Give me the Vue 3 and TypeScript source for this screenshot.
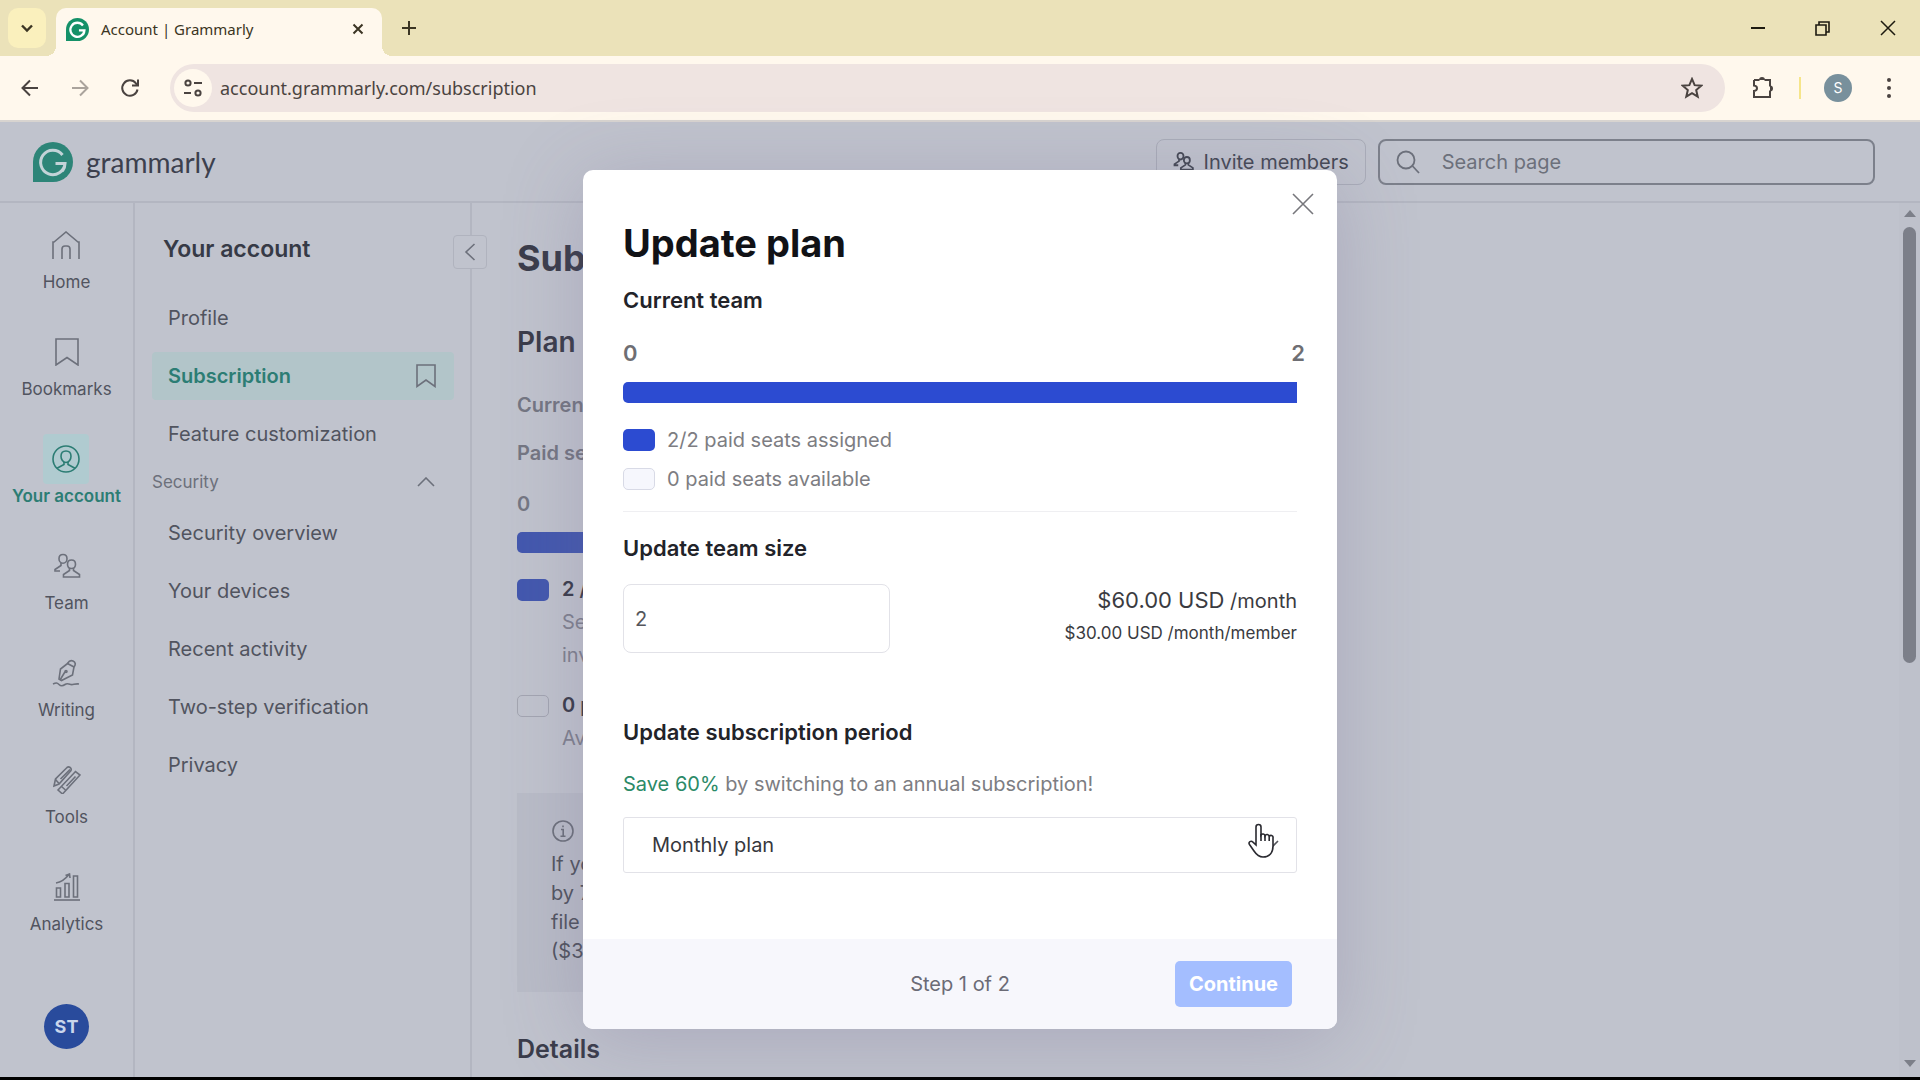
<script setup lang="ts">
import { ref } from 'vue'

interface RailItem {
  label: string
  paths: string[]
  active?: boolean
}

const rail: RailItem[] = [
  { label: 'Home', paths: ['M1 28V11h1L14 1l12 10h1v17', 'M10 28V18a3 3 0 0 1 3-3h2a3 3 0 0 1 3 3v10'] },
  { label: 'Bookmarks', paths: ['M3 1h22v26l-11-7.500-11 7.500z'] },
  {
    label: 'Your account',
    active: true,
    paths: [
      'M14 1a13 13 0 1 1 0 26a13 13 0 0 1 0-26z',
      'M14 6c3.400 0 5 2.400 5 5.200c0 3.200-2 6.300-5 6.300s-5-3.100-5-6.300C9 8.400 10.600 6 14 6z',
      'M12 17v2.500L5 23.300M16 17v2.500l7 3.800',
    ],
  },
  {
    label: 'Team',
    paths: [
      'M10 2.500c2.600 0 4 1.900 4 4.200s-1.500 4.600-4 4.600s-4-2.300-4-4.600s1.400-4.200 4-4.200z',
      'M8 11v2.500L2 17.500v1.500h5',
      'M18.500 8c2.600 0 4 1.900 4 4.200s-1.500 4.300-4 4.300s-4-2-4-4.300S15.900 8 18.500 8z',
      'M16.500 16v2.500L10.500 22.500v2.500h16v-2.500L20.500 18.500V16',
    ],
  },
  {
    label: 'Writing',
    paths: [
      'M15.500 4.500l6.500 3.500l-1.500 8L9.500 21.500L7 20L8.500 10z',
      'M15.500 4.500C17 2 18.500 .8 21 2s3 3.500 1 6',
      'M8 21l5.500-9M13 12.500a1 1 0 1 0 2 0a1 1 0 1 0-2 0',
      'M1 25c3-1.500 4-1.500 6 .5s4 1.500 6 0s4-.5 6 0s4-1 8-.5',
    ],
  },
  {
    label: 'Tools',
    paths: [
      'M1 20l1.500-7L14 1.500c2-1.500 5 .5 4 3L6 18z',
      'M2.500 13.500L6 17.500M7.500 13L17 3.500',
      'M5 24L22.500 5.500L27 9L9.500 28z',
      'M8.500 20.500l4 3.500M13.500 20l9-9.500',
    ],
  },
  {
    label: 'Analytics',
    paths: [
      'M1 27h26',
      'M3.500 15h4v9h-4zM12 10.500h4V24h-4zM20.500 3h4v21h-4z',
      'M3 10c6-1 9-3.500 13-8.500M12.500 2.500L16.500 1l.5 4',
    ],
  },
]

const accountLinks = ['Profile', 'Subscription', 'Feature customization']
const securityLinks = ['Security overview', 'Your devices', 'Recent activity', 'Two-step verification', 'Privacy']

const teamSize = ref('2')
const period = ref('monthly')
const address = ref('account.grammarly.com/subscription')
</script>

<template>
  <div class="window">
    <div class="tabstrip">
      <button class="tab-menu" aria-label="Search tabs">
        <svg width="12" height="12" viewBox="0 0 12 12"><path d="M1 3.500l5 5 5-5" stroke-width="2.400" /></svg>
      </button>
      <div class="tab">
        <svg class="favicon" width="23" height="23" viewBox="0 0 40 40">
          <path class="mark" d="M20 0a20 20 0 1 1 0 40H0V20A20 20 0 0 1 20 0z" />
          <path class="glyph" d="M29.500 13A12.200 12.200 0 1 0 32 21.500H22.500M32 21.500c0 3-.8 5.500-2.500 7.500" stroke-width="4" />
        </svg>
        <span class="tab-title">Account | Grammarly</span>
        <button class="plain" aria-label="Close tab">
          <svg width="12" height="12" viewBox="0 0 12 12"><path d="M1.500 1.500l9 9M10.500 1.500l-9 9" stroke-width="2" /></svg>
        </button>
      </div>
      <button class="plain new-tab" aria-label="New tab">
        <svg width="16" height="16" viewBox="0 0 16 16"><path d="M8 1v14M1 8h14" stroke-width="2" /></svg>
      </button>
      <div class="controls">
        <button class="plain" aria-label="Minimize">
          <svg width="14" height="14" viewBox="0 0 14 14"><path d="M0 7h14" stroke-width="2" /></svg>
        </button>
        <button class="plain" aria-label="Restore">
          <svg width="15" height="15" viewBox="0 0 15 15"><path d="M1 4h10v10H1zM4 4V1h10v10h-3" stroke-width="1.600" /></svg>
        </button>
        <button class="plain" aria-label="Close">
          <svg width="16" height="16" viewBox="0 0 16 16"><path d="M1 1l14 14M15 1L1 15" stroke-width="1.500" /></svg>
        </button>
      </div>
    </div>

    <div class="toolbar">
      <button class="plain nav-button" aria-label="Back">
        <svg width="18" height="18" viewBox="0 0 18 18"><path d="M17 9H2M9 1.500L1.500 9L9 16.500" stroke-width="2" /></svg>
      </button>
      <button class="plain nav-button faded" aria-label="Forward">
        <svg width="18" height="18" viewBox="0 0 18 18"><path d="M1 9h15M9 1.500L16.500 9L9 16.500" stroke-width="2" /></svg>
      </button>
      <button class="plain nav-button" aria-label="Reload">
        <svg width="20" height="20" viewBox="0 0 20 20"><path d="M17.500 11.500a7.700 7.700 0 1 1-1.500-6.200L18 7.500M18 1.500v6h-6" stroke-width="2" /></svg>
      </button>
      <div class="omnibox">
        <button class="site-info" aria-label="Site information">
          <svg width="18" height="18" viewBox="0 0 18 18">
            <path d="M10 4h8M0 14h7" stroke-width="2" />
            <circle cx="4" cy="4" r="2.600" stroke-width="2" />
            <circle cx="14" cy="14" r="2.600" stroke-width="2" />
          </svg>
        </button>
        <input v-model="address" class="address" type="text" aria-label="Address" />
        <button class="plain" aria-label="Bookmark this tab">
          <svg width="22" height="22" viewBox="0 0 20 20">
            <path d="M10 1.800l2.400 5.600 6 .5-4.600 4 1.400 6-5.200-3.200-5.200 3.200 1.400-6-4.600-4 6-.5z" stroke-width="1.800" />
          </svg>
        </button>
      </div>
      <button class="plain extensions" aria-label="Extensions">
        <svg width="24" height="24" viewBox="0 0 24 24">
          <path d="M3 4h5.500M13.500 4H19v6.500M19 14.500V21H3v-6c4-.5 4-5 0-5.500V4" stroke-width="2" />
          <path class="solid" d="M8 4a3 3 0 0 1 6 0zM19 9.500a3 3 0 0 1 0 6z" />
        </svg>
      </button>
      <span class="divider"></span>
      <button class="profile" aria-label="Profile">S</button>
      <button class="plain" aria-label="Browser menu">
        <svg width="6" height="22" viewBox="0 0 6 22">
          <g class="solid"><circle cx="3" cy="3" r="2" /><circle cx="3" cy="11" r="2" /><circle cx="3" cy="19" r="2" /></g>
        </svg>
      </button>
    </div>

    <div class="page">
      <header class="topbar">
        <a href="#" class="brand">
          <svg width="40" height="40" viewBox="0 0 40 40">
            <path class="mark" d="M20 0a20 20 0 1 1 0 40H0V20A20 20 0 0 1 20 0z" />
            <path class="glyph" d="M29.500 13A12.200 12.200 0 1 0 32 21.500H22.500M32 21.500c0 3-.8 5.500-2.500 7.500" stroke-width="3" />
          </svg>
          <span>grammarly</span>
        </a>
        <button class="invite">
          <svg width="21" height="21" viewBox="0 0 28 28">
            <path v-for="d in rail[3].paths" :key="d" :d="d" stroke-width="2.400" />
          </svg>
          Invite members
        </button>
        <label class="search">
          <svg width="24" height="24" viewBox="0 0 24 24"><circle cx="10" cy="10" r="8.500" stroke-width="1.800" /><path d="M16.500 16l6.500 7" stroke-width="1.800" /></svg>
          <input type="search" placeholder="Search page" aria-label="Search page" />
        </label>
      </header>

      <div class="body">
        <nav class="rail" aria-label="Primary">
          <a v-for="item in rail" :key="item.label" href="#" class="rail-item" :class="{ active: item.active }">
            <span class="rail-icon">
              <svg width="28" height="28" viewBox="0 0 28 28">
                <path v-for="d in item.paths" :key="d" :d="d" stroke-width="1.600" />
              </svg>
            </span>
            {{ item.label }}
          </a>
          <span class="user">ST</span>
        </nav>

        <nav class="side" aria-label="Account">
          <h2>Your account</h2>
          <button class="collapse" aria-label="Collapse menu">
            <svg width="12" height="20" viewBox="0 0 12 20"><path d="M10.500 2L2 10l8.500 8" stroke-width="1.600" /></svg>
          </button>
          <div class="links">
            <a v-for="link in accountLinks" :key="link" href="#" :class="{ active: link === 'Subscription' }">
              {{ link }}
              <svg v-if="link === 'Subscription'" width="20" height="24" viewBox="0 0 20 24">
                <path d="M1 1h18v21.500l-9-6.500-9 6.500z" stroke-width="1.600" />
              </svg>
            </a>
          </div>
          <button class="group">
            Security
            <svg width="18" height="10" viewBox="0 0 18 10"><path d="M1 9l8-8 8 8" stroke-width="1.600" /></svg>
          </button>
          <div class="links">
            <a v-for="link in securityLinks" :key="link" href="#">{{ link }}</a>
          </div>
        </nav>

        <main class="content">
          <h1>Subscription</h1>
          <h2 class="section">Plan</h2>
          <p class="meta">Current plan</p>
          <p class="meta seats">Paid seats</p>
          <p class="meta count">0</p>
          <div class="meter"></div>
          <div class="seat">
            <span class="swatch full"></span>
            <p><b>2 / 2 paid seats</b><br />Seats assigned to members and<br />invitations</p>
          </div>
          <div class="seat">
            <span class="swatch"></span>
            <p><b>0 paid seats</b><br />Available seats</p>
          </div>
          <div class="notice">
            <svg width="24" height="28" viewBox="0 0 24 28">
              <circle cx="12" cy="14" r="10" stroke-width="1.600" />
              <path d="M10 12.500h2.200V19M9.500 19.300h5M12 8.500v1.800" stroke-width="1.600" />
            </svg>
            <p>If you<br />by 7<br />file<br />($30.00)</p>
          </div>
          <h2 class="section details">Details</h2>
        </main>

        <div class="scrollbar">
          <svg width="12" height="7" viewBox="0 0 12 7"><path class="solid" d="M6 0l6 7H0z" /></svg>
          <span class="thumb"></span>
          <svg width="12" height="7" viewBox="0 0 12 7"><path class="solid" d="M0 0h12L6 7z" /></svg>
        </div>
      </div>

      <div class="overlay">
        <section class="modal" role="dialog" aria-labelledby="modal-title">
          <button class="plain dismiss" aria-label="Close dialog">
            <svg width="22" height="22" viewBox="0 0 22 22"><path d="M1 1l20 20M21 1L1 21" stroke-width="1.600" /></svg>
          </button>
          <div class="modal-body">
            <h2 id="modal-title">Update plan</h2>
            <h3 class="team">Current team</h3>
            <div class="scale"><span>0</span><span>2</span></div>
            <div class="meter"></div>
            <ul class="legend">
              <li><span class="swatch full"></span>2/2 paid seats assigned</li>
              <li><span class="swatch"></span>0 paid seats available</li>
            </ul>
            <h3 class="size"><label for="team-size">Update team size</label></h3>
            <div class="size-row">
              <input id="team-size" v-model="teamSize" type="text" />
              <div class="price">
                <p><span class="amount">$60.00 USD</span> /month</p>
                <p class="each">$30.00 USD /month/member</p>
              </div>
            </div>
            <h3 class="period"><label for="period">Update subscription period</label></h3>
            <p class="offer"><em>Save 60%</em> by switching to an annual subscription!</p>
            <div class="select-wrap">
              <select id="period" v-model="period">
                <option value="monthly">Monthly plan</option>
                <option value="annual">Annual plan</option>
              </select>
              <svg class="caret" width="18" height="11" viewBox="0 0 18 11"><path d="M1 1l8 8 8-8" stroke-width="1.600" /></svg>
              <svg class="pointer" width="30" height="36" viewBox="0 0 30 36">
                <path
                  d="M9 22V4a2.500 2.500 0 0 1 5 0v8a2.200 2.200 0 0 1 4 .8a2.200 2.200 0 0 1 4.200.8a2 2 0 0 1 3.800 1.200V23c0 6.500-3.500 11-10 11c-4.500 0-7-3-9-6l-4.500-6.500c-1.500-2.500 1.500-4.300 3.500-2.300z"
                  stroke-width="1.600"
                />
                <path d="M14 11v7M18 12.500V18M22.200 13.500V18" stroke-width="1.600" />
              </svg>
            </div>
          </div>
          <footer>
            <span>Step 1 of 2</span>
            <button class="continue">Continue</button>
          </footer>
        </section>
      </div>
    </div>
  </div>
</template>

<style>
body {
  margin: 0;
  background: #000;
}
</style>

<style scoped>
* {
  box-sizing: border-box;
}
.window {
  display: flex;
  flex-direction: column;
  min-height: 100vh;
  padding-bottom: 3px;
  font-family: Inter, 'Liberation Sans', sans-serif;
  font-size: 20px;
  line-height: 28px;
}
h1, h2, h3, p, ul {
  margin: 0;
  padding: 0;
}
button, input, select {
  font: inherit;
  color: inherit;
}
button {
  display: flex;
  align-items: center;
  justify-content: center;
}
a {
  color: inherit;
  text-decoration: none;
}
svg {
  display: block;
  flex: none;
  fill: none;
  stroke: currentColor;
}
.solid {
  fill: currentColor;
  stroke: none;
}
.mark {
  fill: #2d8578;
  stroke: none;
}
.favicon .mark {
  fill: #159168;
}
.glyph {
  stroke: #c3d3d8;
}
.favicon .glyph {
  stroke: #fff;
}
.plain {
  padding: 0;
  border: 0;
  background: none;
}

/* Browser frame */
.tabstrip {
  display: flex;
  align-items: center;
  height: 56px;
  padding-left: 8px;
  background: #ebe2b9;
  color: #3b3523;
  font-family: 'Noto Sans', sans-serif;
}
.tab-menu {
  width: 38px;
  height: 40px;
  padding: 0;
  border: 0;
  border-radius: 10px;
  background: #faf0bd;
}
.tab {
  position: relative;
  display: flex;
  align-items: center;
  align-self: flex-end;
  width: 326px;
  height: 48px;
  margin-left: 10px;
  padding: 0 18px 6px 10px;
  border-radius: 10px 10px 0 0;
  background: #fff8ed;
}
.tab::before,
.tab::after {
  position: absolute;
  bottom: 0;
  width: 10px;
  height: 10px;
  content: '';
}
.tab::before {
  right: 100%;
  background: radial-gradient(circle at 0 0, transparent 10px, #fff8ed 10px);
}
.tab::after {
  left: 100%;
  background: radial-gradient(circle at 100% 0, transparent 10px, #fff8ed 10px);
}
.tab-title {
  flex: 1;
  margin-left: 12px;
  font-size: 15px;
}
.new-tab {
  margin-left: 19px;
}
.controls {
  display: flex;
  gap: 50px;
  margin-left: auto;
  padding-right: 24px;
  color: #1d1a10;
}
.toolbar {
  display: flex;
  align-items: center;
  height: 66px;
  padding: 0 28px 0 20px;
  border-bottom: 2px solid #d8d4d0;
  background: #fff8ed;
  color: #4a4340;
}
.nav-button {
  width: 20px;
  margin-right: 30px;
}
.nav-button.faded {
  color: #aaa39c;
}
.omnibox {
  display: flex;
  flex: 1;
  align-items: center;
  height: 48px;
  padding: 0 22px 0 4px;
  border-radius: 24px;
  background: #efe4e1;
}
.site-info {
  width: 38px;
  height: 38px;
  padding: 0;
  border: 0;
  border-radius: 50%;
  background: #fff8ed;
}
.address {
  flex: 1;
  min-width: 0;
  margin-left: 8px;
  padding: 0;
  border: 0;
  outline: 0;
  background: none;
  font-family: 'Noto Sans', sans-serif;
  font-size: 18px;
}
.extensions {
  margin-left: 26px;
}
.divider {
  width: 2px;
  height: 22px;
  margin: 0 23px 0 24px;
  background: #f6e58a;
}
.profile {
  width: 28px;
  height: 28px;
  margin-right: 34px;
  padding: 0;
  border: 0;
  border-radius: 50%;
  background: #78909c;
  color: #fff;
  font-size: 14px;
}

/* Page under the dialog */
.page {
  position: relative;
  display: flex;
  flex: 1;
  flex-direction: column;
  background: #c0c3cd;
  color: #51545f;
}
.topbar {
  display: flex;
  align-items: center;
  height: 81px;
  padding: 0 45px 0 33px;
  border-bottom: 2px solid #b3b6c1;
}
.brand {
  display: flex;
  gap: 13px;
  align-items: center;
  margin-right: auto;
  color: #3c404d;
  font-family: Lato, sans-serif;
  font-size: 28px;
}
.invite {
  gap: 10px;
  width: 210px;
  height: 46px;
  padding: 0;
  border: 1px solid #a9acb8;
  border-radius: 8px;
  background: none;
  color: #444854;
}
.search {
  display: flex;
  gap: 22px;
  align-items: center;
  width: 27%;
  height: 46px;
  margin-left: 12px;
  padding: 0 16px;
  border: 2px solid #7c808b;
  border-radius: 8px;
  color: #6c707b;
}
.search input {
  flex: 1;
  min-width: 0;
  padding: 0;
  border: 0;
  outline: 0;
  background: none;
}
.search input::placeholder {
  color: #6c707b;
}
.body {
  display: flex;
  flex: 1;
}
.rail {
  display: flex;
  flex-direction: column;
  gap: 33px;
  align-items: center;
  width: 135px;
  padding: 17px 0 28px;
  border-right: 2px solid #b3b6c1;
}
.rail-item {
  display: flex;
  flex-direction: column;
  align-items: center;
  font-size: 17px;
  line-height: 24px;
}
.rail-icon {
  display: flex;
  align-items: center;
  justify-content: center;
  width: 46px;
  height: 50px;
  color: #6c707b;
}
.rail-item.active {
  color: #2c7d74;
  font-weight: 600;
}
.active .rail-icon {
  border-radius: 4px;
  background: #b0cbd0;
  color: #2c7d74;
}
.user {
  width: 45px;
  height: 45px;
  margin-top: auto;
  border-radius: 50%;
  background: #294b9c;
  color: #c9d6ec;
  font-size: 18px;
  font-weight: 700;
  line-height: 45px;
  text-align: center;
}
.side {
  position: relative;
  width: 337px;
  padding: 31px 16px 0 17px;
  border-right: 2px solid #b3b6c1;
}
.side h2 {
  margin: 0 0 30px 11px;
  color: #363a46;
  font-size: 23px;
  font-weight: 600;
  line-height: 30px;
}
.collapse {
  position: absolute;
  top: 32px;
  right: -17px;
  width: 34px;
  height: 34px;
  padding: 0;
  border: 1px solid #b0b3be;
  border-radius: 4px;
  background: #c0c3cd;
  color: #6c707b;
}
.links {
  display: flex;
  flex-direction: column;
  gap: 10px;
}
.links a {
  display: flex;
  align-items: center;
  justify-content: space-between;
  height: 48px;
  padding: 0 18px 0 16px;
}
.links a.active {
  border-radius: 4px;
  background: #b2c5c9;
  color: #2c7d74;
  font-weight: 600;
}
.links a.active svg {
  color: #6c707b;
}
.group {
  justify-content: space-between;
  width: 100%;
  margin: 12px 0 15px;
  padding: 0 19px 0 0;
  border: 0;
  background: none;
  color: #6c707b;
  font-size: 17px;
  line-height: 24px;
}
.content {
  flex: 1;
  padding: 35px 45px 12px;
}
h1 {
  color: #3a3c4a;
  font-size: 36px;
  line-height: 40px;
}
.section {
  margin-top: 48px;
  color: #3a3c4a;
  font-size: 28px;
  font-weight: 600;
  line-height: 32px;
}
.section.details {
  margin-top: 41px;
  font-size: 25px;
}
.meta {
  margin-top: 35px;
  color: #747682;
  font-weight: 600;
  line-height: 24px;
}
.meta.seats {
  margin-top: 24px;
}
.meta.count {
  margin: 27px 0 16px;
}
.meter {
  height: 21px;
  border-radius: 5px 0 0 5px;
  background: #2c4bd1;
}
.content .meter {
  width: 674px;
  margin-bottom: 20px;
  background: #4358ae;
}
.seat {
  display: flex;
  gap: 13px;
  margin-bottom: 17px;
  color: #7f818e;
  line-height: 33px;
}
.seat b {
  color: #3a3c4a;
  font-weight: 600;
}
.swatch {
  flex: none;
  width: 32px;
  height: 22px;
  border: 1px solid #d8dae6;
  border-radius: 5px;
  background: #f6f7fd;
}
.swatch.full {
  border: 0;
  background: #2c4bd1;
}
.content .swatch {
  margin-top: 6px;
  border-color: #a3a5b1;
  background: none;
}
.content .swatch.full {
  background: #4358ae;
}
.notice {
  width: 674px;
  margin-top: 38px;
  padding: 24px 34px 26px;
  background: #b9bcc7;
  line-height: 29px;
}
.notice svg {
  color: #6c707b;
}
.notice p {
  margin-top: 5px;
}
.scrollbar {
  display: flex;
  flex-direction: column;
  gap: 10px;
  align-items: center;
  width: 21px;
  padding: 7px 0 10px;
  background: #bec1cb;
  color: #7c7f89;
}
.thumb {
  width: 13px;
  height: 436px;
  margin-bottom: auto;
  border-radius: 7px;
  background: #7c7f89;
}

/* Dialog */
.overlay {
  position: absolute;
  inset: 0;
  display: flex;
  align-items: center;
  justify-content: center;
}
.modal {
  position: relative;
  width: 754px;
  max-width: 100%;
  border-radius: 10px;
  background: #fff;
  box-shadow: 0 10px 80px rgba(110, 100, 145, 0.28);
  color: #222329;
}
.dismiss {
  position: absolute;
  top: 23px;
  right: 23px;
  color: #77777c;
}
.modal-body {
  padding: 51px 40px 66px;
}
.modal h2 {
  color: #111216;
  font-size: 38px;
  line-height: 44px;
}
h3 {
  font-size: 22px;
  font-weight: 600;
  line-height: 28px;
}
.team {
  margin-top: 21px;
}
.scale {
  display: flex;
  justify-content: space-between;
  margin: 27px -8px 17px 0;
  color: #6e6e73;
  font-size: 22px;
  font-weight: 600;
  line-height: 24px;
}
.legend {
  display: flex;
  flex-direction: column;
  gap: 11px;
  margin-top: 23px;
  padding-bottom: 18px;
  border-bottom: 1px solid #efeff2;
  color: #7d7d82;
  list-style: none;
}
.legend li {
  display: flex;
  gap: 12px;
  align-items: center;
}
.size {
  margin: 22px 0;
}
.size-row {
  display: flex;
  align-items: center;
  justify-content: space-between;
}
.size-row input {
  width: 267px;
  height: 69px;
  padding: 0 11px;
  border: 1px solid #e2e2e8;
  border-radius: 8px;
  background: #fff;
  color: #55565c;
}
.price {
  padding-bottom: 4px;
  color: #3a3b41;
  line-height: 32px;
  text-align: right;
}
.amount {
  font-size: 22px;
}
.each {
  font-size: 17px;
}
.period {
  margin-top: 65px;
}
.offer {
  margin: 24px 0 19px;
  color: #7d7d82;
}
.offer em {
  color: #2b8a67;
  font-style: normal;
}
.select-wrap {
  position: relative;
}
select {
  display: block;
  width: 100%;
  height: 56px;
  padding: 0 28px;
  border: 1px solid #e2e2e8;
  border-radius: 3px;
  background: #fff;
  color: #36373d;
  appearance: none;
}
.caret {
  position: absolute;
  top: 23px;
  right: 18px;
  color: #55565c;
}
.pointer {
  position: absolute;
  top: 6px;
  right: 20px;
  fill: #fff;
  color: #2a2a30;
}
footer {
  display: flex;
  align-items: center;
  justify-content: flex-end;
  height: 90px;
  padding: 0 45px;
  border-radius: 0 0 10px 10px;
  background: #f7f7fc;
  color: #6b6b76;
}
footer span {
  flex: 1;
  padding-left: 117px;
  text-align: center;
}
.continue {
  width: 117px;
  height: 46px;
  padding: 0;
  border: 0;
  border-radius: 5px;
  background: #a4beff;
  color: #fff;
  font-weight: 700;
}
</style>
